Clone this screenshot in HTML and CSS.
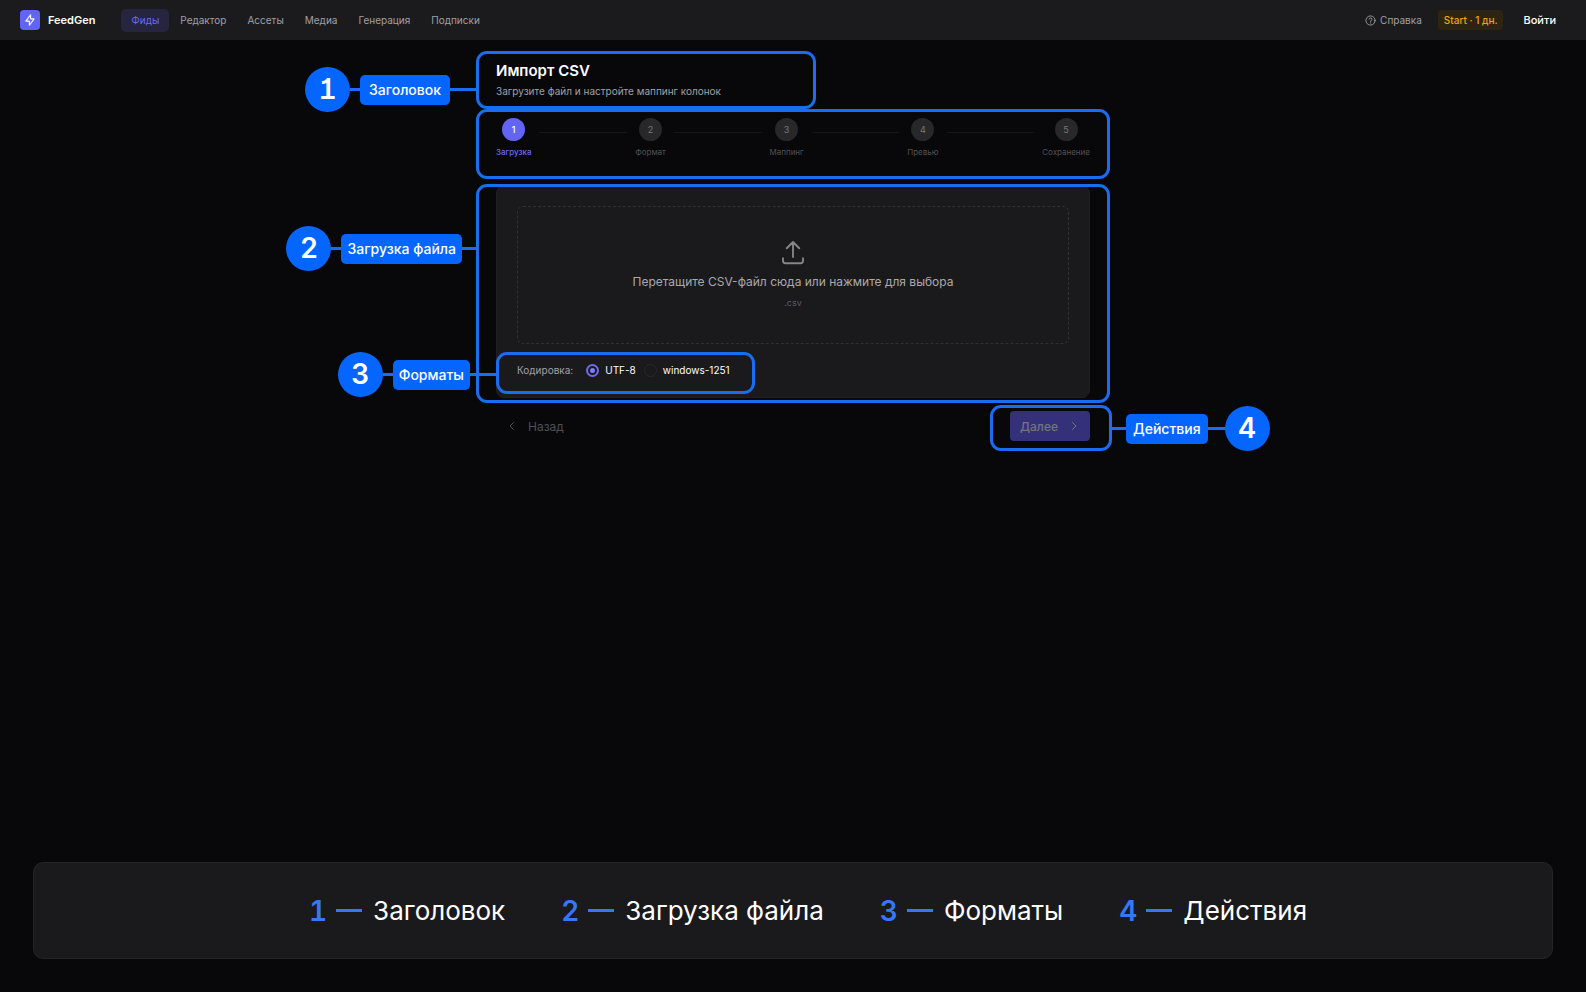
FILE: index.html
```html
<!DOCTYPE html>
<html lang="ru">
<head>
    <meta charset="UTF-8">
    <meta name="viewport" content="width=device-width, initial-scale=1.0">
    <title>FeedGen - Импорт CSV</title>
    <link rel="stylesheet" href="styles.css">
</head>
<body>

<header class="topbar">
    <a href="#" class="logo">
        <span class="logo-mark">
            <svg viewBox="0 0 24 24"><path d="M13 3v7h6l-8 11v-7H5l8-11"/></svg>
        </span>
        FeedGen
    </a>
    <nav class="menu">
        <a href="#" class="active">Фиды</a>
        <a href="#">Редактор</a>
        <a href="#">Ассеты</a>
        <a href="#">Медиа</a>
        <a href="#">Генерация</a>
        <a href="#">Подписки</a>
    </nav>
    <div class="account">
        <a href="#" class="help">
            <svg viewBox="0 0 24 24"><circle cx="12" cy="12" r="10"/><path d="M9 9a3 3 0 0 1 6 1c0 2-3 2.500-3 4M12 17v.5"/></svg>
            Справка
        </a>
        <a href="#" class="plan">Start · 1 дн.</a>
        <a href="#" class="login">Войти</a>
    </div>
</header>

<main class="container">
    <!-- Page title -->
    <section class="page-head">
        <h1>Импорт CSV</h1>
        <p>Загрузите файл и настройте маппинг колонок</p>
        <div class="frame frame-title">
            <div class="callout">
                <span class="num">1</span><i class="line"></i><span class="tag wide">Заголовок</span><i class="line long"></i>
            </div>
        </div>
    </section>

    <!-- Import steps -->
    <section class="steps-wrap">
        <ol class="steps">
            <li class="step current"><span>1</span>Загрузка</li>
            <li class="bar"></li>
            <li class="step"><span>2</span>Формат</li>
            <li class="bar"></li>
            <li class="step"><span>3</span>Маппинг</li>
            <li class="bar"></li>
            <li class="step"><span>4</span>Превью</li>
            <li class="bar"></li>
            <li class="step"><span>5</span>Сохранение</li>
        </ol>
        <div class="frame frame-steps"></div>
    </section>

    <!-- File upload -->
    <section class="upload">
        <div class="card">
            <label class="dropzone" for="file">
                <svg viewBox="0 0 24 24"><path d="M4 17v2a2 2 0 0 0 2 2h12a2 2 0 0 0 2-2v-2M7 9l5-5 5 5M12 4v12"/></svg>
                <span class="drop-text">Перетащите CSV-файл сюда или нажмите для выбора</span>
                <span class="drop-ext">.csv</span>
                <input type="file" id="file" accept=".csv">
            </label>
            <div class="encoding">
                <span class="encoding-title">Кодировка:</span>
                <input type="radio" name="encoding" id="utf8" checked>
                <label for="utf8">UTF-8</label>
                <input type="radio" name="encoding" id="win1251">
                <label for="win1251">windows-1251</label>
                <div class="frame frame-formats">
                    <div class="callout">
                        <span class="num">3</span><i class="line"></i><span class="tag">Форматы</span><i class="line long"></i>
                    </div>
                </div>
            </div>
        </div>
        <div class="frame frame-upload">
            <div class="callout">
                <span class="num">2</span><i class="line"></i><span class="tag">Загрузка файла</span><i class="line mid"></i>
            </div>
        </div>
    </section>

    <!-- Buttons -->
    <div class="actions">
        <button type="button" class="back">
            <svg viewBox="0 0 24 24"><path d="M15 5l-7 7 7 7"/></svg>
            Назад
        </button>
        <div class="next-wrap">
            <button type="button" class="next">
                Далее
                <svg viewBox="0 0 24 24"><path d="M9 5l7 7-7 7"/></svg>
            </button>
            <div class="frame frame-actions">
                <div class="callout callout-right">
                    <i class="line mid"></i><span class="tag">Действия</span><i class="line mid"></i><span class="num">4</span>
                </div>
            </div>
        </div>
    </div>
</main>

<footer class="legend">
    <div><b>1</b><i></i>Заголовок</div>
    <div><b>2</b><i></i>Загрузка файла</div>
    <div><b>3</b><i></i>Форматы</div>
    <div><b>4</b><i></i>Действия</div>
</footer>

</body>
</html>
```
FILE: styles.css
```css
* {
    box-sizing: border-box;
}

body, h1, p, ol {
    margin: 0;
    padding: 0;
}

body {
    font-family: Inter, "Liberation Sans", sans-serif;
    background-color: #08080a;
    color: #ffffff;
    min-height: 100vh;
    display: flex;
    flex-direction: column;
}

a {
    color: inherit;
    text-decoration: none;
}

svg {
    fill: none;
    stroke: currentColor;
    stroke-width: 2;
    stroke-linecap: round;
    stroke-linejoin: round;
}

/* Top bar */
.topbar {
    height: 40px;
    padding: 0 30px 0 20px;
    background-color: #1b1b1d;
    display: flex;
    align-items: center;
}

.logo {
    display: flex;
    align-items: center;
    gap: 8px;
    font-size: 11px;
    font-weight: 600;
}

.logo-mark {
    width: 20px;
    height: 20px;
    border-radius: 4px;
    background-color: #6264f4;
    display: flex;
    align-items: center;
    justify-content: center;
}

.logo-mark svg {
    width: 14px;
    height: 14px;
}

.menu {
    display: flex;
    gap: 1px;
    margin-left: 26px;
    font-size: 10px;
    color: #a0a0a6;
}

.menu a {
    padding: 0 10px;
    line-height: 23px;
    border-radius: 5px;
}

.menu .active {
    background-color: #25253f;
    color: #6d6af0;
}

.account {
    margin-left: auto;
    display: flex;
    align-items: center;
    font-size: 10px;
}

.help {
    display: flex;
    align-items: center;
    gap: 4px;
    color: #a0a0a6;
}

.help svg {
    width: 11px;
    height: 11px;
}

.plan {
    margin: 0 20px 0 16px;
    padding: 0 6px;
    line-height: 20px;
    border-radius: 4px;
    background-color: #2e2414;
    color: #eda41a;
    font-weight: 500;
}

.login {
    font-size: 11px;
    font-weight: 500;
}

/* Content */
.container {
    width: 100%;
    max-width: 594px;
    margin: 0 auto;
    padding-top: 21px;
}

.page-head {
    position: relative;
    margin-bottom: 19px;
}

h1 {
    font-size: 15px;
    line-height: 20px;
    font-weight: 600;
}

.page-head p {
    margin-top: 2px;
    font-size: 10px;
    line-height: 16px;
    color: #a0a0a6;
}

/* Steps */
.steps-wrap {
    position: relative;
    margin-bottom: 27px;
}

.steps {
    display: flex;
    list-style: none;
}

.step {
    display: flex;
    flex-direction: column;
    align-items: center;
    gap: 5px;
    font-size: 8px;
    line-height: 12px;
    color: #515156;
}

.step span {
    width: 23px;
    height: 23px;
    border-radius: 50%;
    background-color: #28282a;
    color: #77777c;
    font-size: 9px;
    line-height: 23px;
    text-align: center;
}

.step.current {
    color: #6d6af0;
    font-weight: 500;
}

.step.current span {
    background-color: #6264f4;
    color: #ffffff;
}

.bar {
    flex: 1;
    height: 1px;
    margin: 14px 8px 0;
    background-color: #151517;
}

/* Upload card */
.upload {
    position: relative;
}

.card {
    padding: 20px 20px 18px;
    border: 1px solid #202022;
    border-radius: 8px;
    background-color: #1a1a1c;
}

.dropzone {
    height: 138px;
    padding-top: 30px;
    border: 1px dashed #303033;
    border-radius: 6px;
    display: flex;
    flex-direction: column;
    align-items: center;
    position: relative;
    cursor: pointer;
}

.dropzone svg {
    width: 30px;
    height: 30px;
    stroke-width: 1.5;
    color: #85858a;
}

.dropzone input {
    position: absolute;
    width: 1px;
    height: 1px;
    opacity: 0;
}

.drop-text {
    margin-top: 6px;
    font-size: 12px;
    line-height: 18px;
    color: #a9a9ae;
}

.drop-ext {
    margin-top: 6px;
    font-size: 9px;
    line-height: 12px;
    color: #5b5b60;
}

.encoding {
    position: relative;
    display: flex;
    align-items: center;
    width: fit-content;
    height: 18px;
    margin-top: 17px;
    font-size: 10px;
}

.encoding-title {
    margin-right: 13px;
    color: #a0a0a6;
}

.encoding input {
    appearance: none;
    width: 13px;
    height: 13px;
    margin: 0 6px 0 0;
    border: 1px solid #28282b;
    border-radius: 50%;
}

.encoding input:checked {
    border: 2px solid #6d6af0;
    background-color: #7f7cf8;
    background-clip: content-box;
    padding: 2px;
}

.encoding label {
    margin-right: 8px;
}

.encoding label:last-of-type {
    margin-right: 0;
}

/* Buttons */
.actions {
    display: flex;
    justify-content: space-between;
    margin-top: 13px;
}

button {
    height: 30px;
    border: none;
    border-radius: 4px;
    display: flex;
    align-items: center;
    font-family: inherit;
    font-size: 12px;
    cursor: pointer;
}

button svg {
    width: 12px;
    height: 12px;
}

.back {
    gap: 10px;
    padding: 0 10px;
    background: none;
    color: #505055;
}

.next-wrap {
    position: relative;
}

.next {
    gap: 10px;
    padding: 0 10px;
    background-color: #34317a;
    color: #74747c;
    font-weight: 500;
}

/* Blue frames with numbered callouts */
.frame {
    position: absolute;
    border: 3px solid #1a6cf0;
    border-radius: 11px;
    pointer-events: none;
}

.frame-title {
    top: -10px;
    bottom: -10px;
    left: -20px;
    width: 340px;
}

.frame-steps {
    inset: -9px -20px -21px;
}

.frame-upload {
    inset: -1px -20px -5px;
}

.frame-formats {
    inset: -9px -25px -15px -21px;
}

.frame-actions {
    inset: -6px -22px -10px -20px;
}

.callout {
    position: absolute;
    top: -3px;
    right: 100%;
    display: flex;
    align-items: center;
}

.callout-right {
    top: -2px;
    right: auto;
    left: 100%;
}

.frame-title .callout {
    top: 13px;
}

.frame-upload .callout {
    top: 39px;
}

.num {
    width: 45px;
    height: 45px;
    border-radius: 50%;
    background-color: #0566ff;
    font-size: 28px;
    line-height: 45px;
    font-weight: 600;
    font-feature-settings: "tnum", "cv01";
    text-align: center;
}

.tag {
    padding: 0 6px;
    border-radius: 5px;
    background-color: #0566ff;
    font-size: 14px;
    line-height: 30px;
    font-weight: 500;
    white-space: nowrap;
}

.tag.wide {
    padding: 0 9px;
}

.callout-right .tag {
    padding: 0 7px;
}

.line {
    width: 10px;
    height: 3px;
    background-color: #1a6cf0;
}

.line.mid {
    width: 17px;
}

.line.long {
    width: 29px;
}

/* Legend */
.legend {
    margin: auto 33px 33px;
    padding: 0 0 0 30px;
    height: 97px;
    border: 1px solid #252527;
    border-radius: 10px;
    background-color: #1a1a1c;
    display: flex;
    align-items: center;
    justify-content: center;
    gap: 56px;
    font-size: 26px;
}

.legend div {
    display: flex;
    align-items: center;
}

.legend b {
    color: #3478f6;
    font-size: 28px;
    font-weight: 600;
    font-feature-settings: "tnum";
}

.legend i {
    width: 26px;
    height: 3px;
    margin: 0 11px 0 9px;
    background-color: #3478f6;
}
```
